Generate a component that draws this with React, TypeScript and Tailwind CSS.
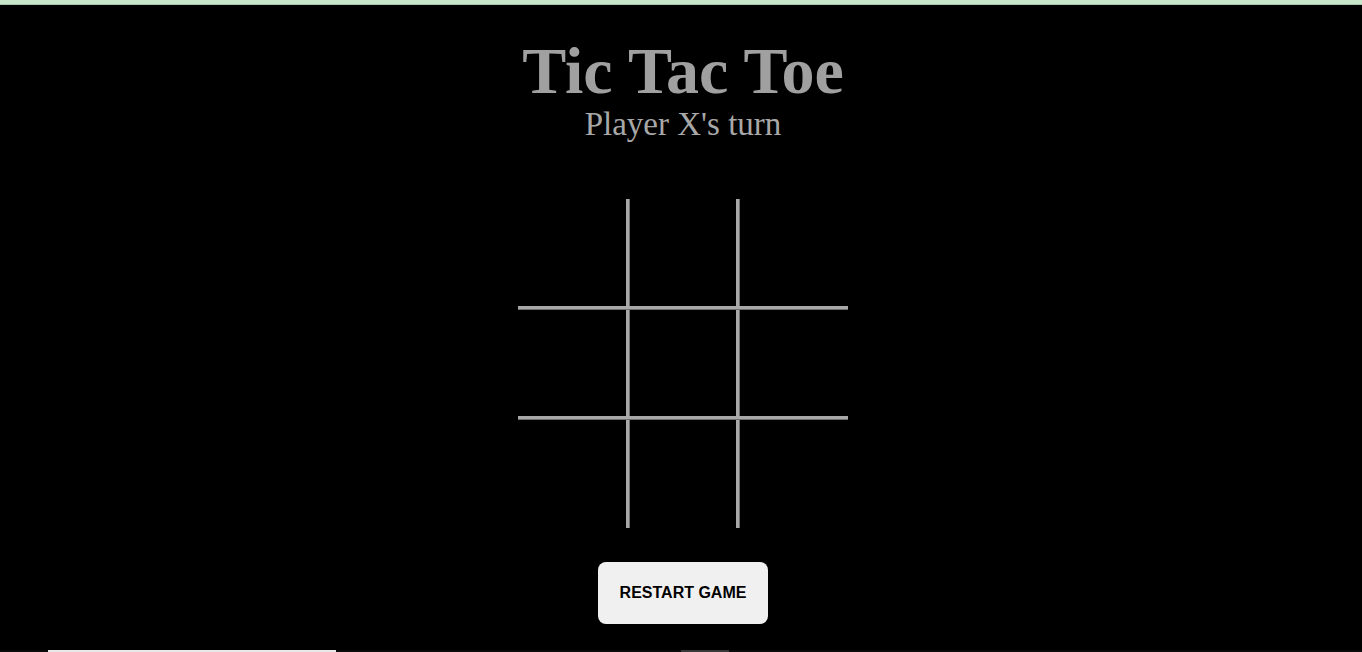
import React from "react";

export default function App() {
  return (
    <div className="w-[1362px] h-[652px] bg-black overflow-hidden flex flex-col relative">
      <div className="h-[4px] bg-[#c8e6c9] shrink-0" />
      <div className="h-[1px] bg-[#a9c2aa] shrink-0" />
      <div className="flex flex-col items-center flex-1 pl-[4px]">
        <h1 className="mt-[28px] text-[66px] leading-[1.15] font-bold text-[#a0a0a0] font-['Liberation_Serif',serif]">
          Tic Tac Toe
        </h1>
        <p className="-mt-[3px] text-[33px] leading-[1.15] text-[#a8a8a8] font-['Liberation_Serif',serif]">
          Player X's turn
        </p>
        <div className="mt-[55px] grid grid-cols-[108px_4px_106px_4px_108px] grid-rows-[107px_4px_106px_4px_108px]">
          <div className="col-start-2 row-start-1 row-span-5 bg-[#a8a8a8] border-r border-[#6e6e6e]" />
          <div className="col-start-4 row-start-1 row-span-5 bg-[#a8a8a8] border-r border-[#6e6e6e]" />
          <div className="col-start-1 col-span-5 row-start-2 bg-[#a8a8a8] border-b border-[#6e6e6e]" />
          <div className="col-start-1 col-span-5 row-start-4 bg-[#a8a8a8] border-b border-[#6e6e6e]" />
        </div>
        <button className="mt-[34px] w-[170px] h-[62px] rounded-[8px] bg-[#f0f0f0] text-black text-[16px] font-bold font-['Liberation_Sans',sans-serif]">
          RESTART GAME
        </button>
      </div>
      <div className="absolute left-0 bottom-0 w-full h-[2px] bg-[#0a0a0a] flex">
        <div className="ml-[48px] w-[288px] h-full bg-[#e8e8e8]" />
        <div className="ml-[345px] w-[48px] h-full bg-[#3a3a3a]" />
      </div>
    </div>
  );
}
